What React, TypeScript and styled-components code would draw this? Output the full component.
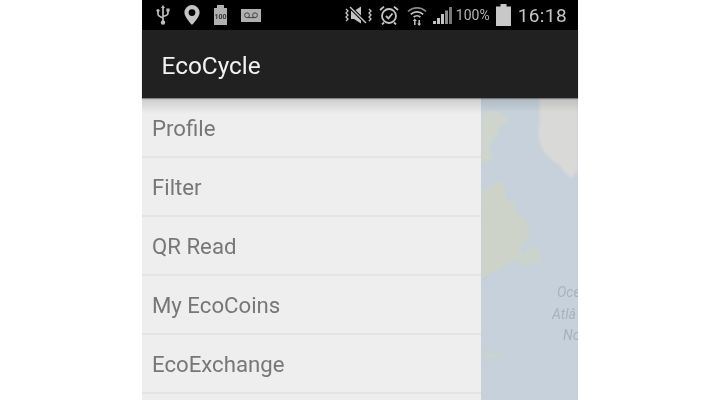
import styled, { createGlobalStyle } from 'styled-components'

const GlobalStyle = createGlobalStyle`
  html, body {
    margin: 0;
    padding: 0;
    background: #fff;
  }
  body {
    font-family: Roboto, "Open Sans", sans-serif;
  }
`

const Page = styled.div`
  width: 720px;
  height: 400px;
  display: flex;
  justify-content: center;
  overflow: hidden;
  background: #fff;
`

const Phone = styled.div`
  width: 436px;
  height: 400px;
  display: flex;
  flex-direction: column;
  background: #000;
`

const StatusBar = styled.div`
  height: 30px;
  flex: none;
  display: flex;
  align-items: center;
  background: #000;
  color: #bdbdbd;
  filter: blur(0.5px);
`

const StatusLeft = styled.div`
  display: flex;
  align-items: center;
  gap: 14px;
  padding-left: 14px;
`

const StatusRight = styled.div`
  margin-left: auto;
  display: flex;
  align-items: center;
  padding-right: 11px;
`

const Slot = styled.div<{ $left: number }>`
  display: flex;
  margin-left: ${(p) => p.$left}px;
`

const Percent = styled.span`
  font-size: 14px;
  margin: 0 6px 0 4px;
  color: #b4b4b4;
`

const Clock = styled.span`
  font-size: 19px;
  margin-left: 7px;
  letter-spacing: 0.4px;
  color: #c4c4c4;
`

const AppBar = styled.div`
  height: 68px;
  flex: none;
  display: flex;
  align-items: center;
  padding: 3px 0 0 19.5px;
  box-sizing: border-box;
  background: #212121;
  position: relative;
  z-index: 2;
  box-shadow: 0 1px 1px rgba(0, 0, 0, 0.35);
`

const Title = styled.h1`
  margin: 0;
  font-size: 24.4px;
  font-weight: 400;
  color: #f2f2f2;
  filter: blur(0.35px);
`

const Content = styled.div`
  flex: 1;
  min-height: 0;
  display: flex;
  position: relative;
`

const Drawer = styled.div`
  width: 339px;
  flex: none;
  background: #eeeeee;
  display: flex;
  flex-direction: column;
  position: relative;
`

const TopShade = styled.div`
  position: absolute;
  left: 0;
  right: 0;
  top: 0;
  height: 16px;
  background: linear-gradient(rgba(0, 0, 0, 0.15), rgba(0, 0, 0, 0));
  pointer-events: none;
  z-index: 1;
`

const MenuRow = styled.div`
  height: 59px;
  flex: none;
  box-sizing: border-box;
  display: flex;
  align-items: center;
  padding: 1px 0 0 10px;
  font-size: 22.2px;
  color: #777777;
  border-bottom: 2px solid #e4e4e4;
  filter: blur(0.4px);

  &:first-of-type {
    height: 60px;
    padding-top: 2px;
  }
`

const MapPane = styled.div`
  flex: 1;
  position: relative;
  overflow: hidden;
  background: #c6d1db;
`

const MapDrawing = styled.svg`
  display: block;
  width: 100%;
  height: 100%;
  filter: blur(1.6px);
`

const MapShade = styled.div`
  position: absolute;
  left: 0;
  right: 0;
  top: 0;
  height: 14px;
  background: linear-gradient(rgba(0, 0, 0, 0.12), rgba(0, 0, 0, 0));
`

const MapLabel = styled.span<{ $top: number; $left: number }>`
  position: absolute;
  top: ${(p) => p.$top}px;
  left: ${(p) => p.$left}px;
  font-size: 14px;
  font-style: italic;
  color: #a9b2bb;
  white-space: nowrap;
  filter: blur(0.4px);
`

const UsbIcon = () => (
  <svg width="14" height="20" viewBox="0 0 14 20" fill="none" stroke="#bdbdbd" strokeWidth="1.7">
    <path d="M7 2v15M2 6v3q0 2 2 2.5L7 13M12 5v3q0 2-2 2.5L7 11.5" />
    <path d="M7 0l2 3H5z" fill="#bdbdbd" stroke="none" />
    <circle cx="2" cy="5.5" r="1.6" fill="#bdbdbd" stroke="none" />
    <rect x="10.4" y="3.5" width="3.2" height="3" fill="#bdbdbd" stroke="none" />
    <circle cx="7" cy="17.5" r="2.2" fill="#bdbdbd" stroke="none" />
  </svg>
)

const PinIcon = () => (
  <svg width="16" height="20" viewBox="0 0 16 20">
    <path
      fillRule="evenodd"
      d="M8 0a7.6 7.6 0 0 1 7.6 7.6C15.6 12.5 8 20 8 20S.4 12.5.4 7.6A7.6 7.6 0 0 1 8 0zm0 4.2a3.4 3.4 0 1 0 0 6.8 3.4 3.4 0 0 0 0-6.8z"
      fill="#c4c4c4"
    />
  </svg>
)

const BatteryBox = styled.div`
  width: 13px;
  height: 17px;
  margin-top: 3px;
  background: #b0b0b0;
  position: relative;
  display: flex;
  align-items: center;
  justify-content: center;
  font-size: 7px;
  font-weight: 700;
  color: #333;

  &::before {
    content: '';
    position: absolute;
    top: -3px;
    left: 3px;
    width: 7px;
    height: 3px;
    background: #b0b0b0;
  }
`

const VoicemailIcon = () => (
  <svg width="20" height="13" viewBox="0 0 20 13">
    <rect width="20" height="13" fill="#b0b0b0" />
    <g fill="none" stroke="#444" strokeWidth="1">
      <circle cx="6" cy="6.2" r="2.4" />
      <circle cx="14" cy="6.2" r="2.4" />
      <path d="M6 8.6h8" />
    </g>
  </svg>
)

const MuteIcon = () => (
  <svg width="29" height="18" viewBox="0 0 29 18" fill="none" stroke="#c4c4c4">
    <path d="M7 5h3l7-4.5v17L10 13H7z" fill="#c4c4c4" stroke="none" />
    <path d="M6 1l16 16" stroke="#000" strokeWidth="3.4" />
    <path d="M6 1l16 16" strokeWidth="1.4" />
    <path d="M2 3l2 2-2 2 2 2-2 2 2 2-2 2M25 3l2 2-2 2 2 2-2 2 2 2-2 2" strokeWidth="1.3" />
  </svg>
)

const AlarmIcon = () => (
  <svg width="20" height="20" viewBox="0 0 20 20" fill="none" stroke="#c4c4c4" strokeWidth="1.8">
    <circle cx="10" cy="11" r="7" />
    <path d="M7 11l2.4 2.4L13.5 8.5" />
    <path d="M1 5l4-3.4M19 5l-4-3.4M5 17.5l-2 2M15 17.5l2 2" />
  </svg>
)

const WifiIcon = () => (
  <svg width="20" height="21" viewBox="0 0 20 21" fill="none" stroke="#c4c4c4" strokeWidth="1.7">
    <path d="M1 6.5a13 13 0 0 1 18 0" stroke="#8a8a8a" />
    <path d="M3.8 9.4a9 9 0 0 1 12.4 0" />
    <path d="M6.6 12.2a5 5 0 0 1 6.8 0" />
    <path d="M7.8 15v5M12.2 20v-5" strokeWidth="1.5" />
    <path d="M7.8 13.5l2 2.4H5.8zM12.2 21l-2-2.4h4z" fill="#c4c4c4" stroke="none" />
  </svg>
)

const SignalIcon = () => (
  <svg width="19" height="17" viewBox="0 0 19 17">
    <rect x="0" y="14" width="3" height="3" fill="#c4c4c4" />
    <rect x="4" y="11" width="3" height="6" fill="#c4c4c4" />
    <rect x="8" y="7" width="3" height="10" fill="#c4c4c4" />
    <rect x="12" y="3.5" width="3" height="13.5" fill="#8c8c8c" />
    <rect x="16" y="0" width="3" height="17" fill="#777" />
  </svg>
)

const BatteryIcon = () => (
  <svg width="15" height="22" viewBox="0 0 15 22">
    <path d="M4.5 0h6v2.5H15V22H0V2.5h4.5z" fill="#c8c8c8" />
  </svg>
)

const rows = ['Profile', 'Filter', 'QR Read', 'My EcoCoins', 'EcoExchange']

export default function App() {
  return (
    <Page>
      <GlobalStyle />
      <Phone>
        <StatusBar>
          <StatusLeft>
            <UsbIcon />
            <PinIcon />
            <BatteryBox>100</BatteryBox>
            <VoicemailIcon />
          </StatusLeft>
          <StatusRight>
            <MuteIcon />
            <Slot $left={6}>
              <AlarmIcon />
            </Slot>
            <Slot $left={8}>
              <WifiIcon />
            </Slot>
            <Slot $left={6}>
              <SignalIcon />
            </Slot>
            <Percent>100%</Percent>
            <BatteryIcon />
            <Clock>16:18</Clock>
          </StatusRight>
        </StatusBar>
        <AppBar>
          <Title>EcoCycle</Title>
        </AppBar>
        <Content>
          <Drawer>
            {rows.map((r) => (
              <MenuRow key={r}>{r}</MenuRow>
            ))}
            <TopShade />
          </Drawer>
          <MapPane>
            <MapDrawing viewBox="0 0 97 302" preserveAspectRatio="none">
              <path d="M58 0h39v72q-4 4-6 8-8-4-12-12l-8-6q-12-8-14-26 3-18 1-36z" fill="#d9d9d8" />
              <path d="M2 16l8-4 10 2 8 6-6 8-6 2 2 6-8 8-2 8 4 6-6 8-6-2V24z" fill="#cfd4cd" />
              <path d="M0 92l8-2 6-6 6-2 4 8 2 12 8 4 2 8 8 6 6 12-6 12-6 8 2 6-8 6-10 4-8 6-14 6z" fill="#cdd3c9" />
              <path d="M36 158l8-2 4-8 10 4 4 14-10-2-6 4-10-4z" fill="#cbd4cb" />
              <path d="M0 252l24 2-8 8-16 2z" fill="#cbd2cd" opacity="0.45" />
            </MapDrawing>
            <MapShade />
            <MapLabel $top={186} $left={76}>Oce</MapLabel>
            <MapLabel $top={208} $left={71}>Atlâ</MapLabel>
            <MapLabel $top={229} $left={82}>No</MapLabel>
          </MapPane>
        </Content>
      </Phone>
    </Page>
  )
}
